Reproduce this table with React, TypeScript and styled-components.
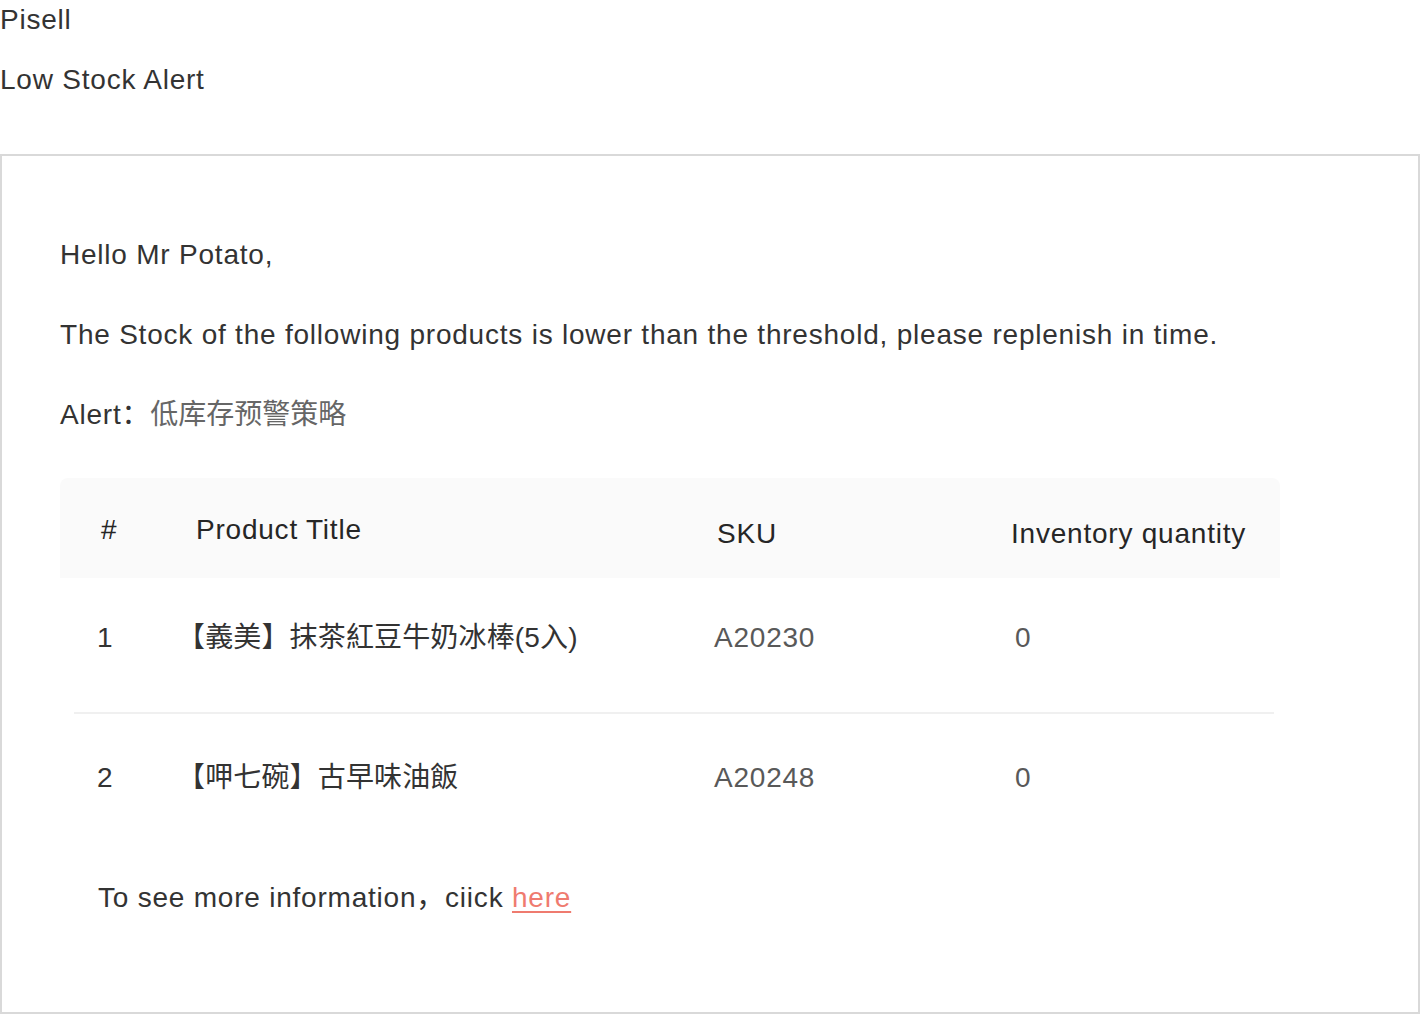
import React from "react";
import styled, { createGlobalStyle } from "styled-components";

const GlobalStyle = createGlobalStyle`
  html, body {
    margin: 0;
    padding: 0;
    background: #ffffff;
  }
  body {
    font-family: "Liberation Sans", "Noto Sans CJK SC", Arial, sans-serif;
    font-size: 28px;
    line-height: 40px;
    letter-spacing: 0.78px;
    color: #333333;
  }
`;

const Page = styled.div`
  width: 1420px;
`;

const Brand = styled.div`
  color: #333333;
`;

const Subject = styled.div`
  margin-top: 20px;
  color: #333333;
`;

const Frame = styled.section`
  box-sizing: border-box;
  margin-top: 54px;
  width: 1420px;
  height: 860px;
  border: 2px solid #d9d9d9;
  padding: 79px 0 0 58px;
`;

const Para = styled.p`
  margin: 0 0 40px;
  color: #333333;
`;

const AlertPara = styled(Para)`
  margin-bottom: 0;
`;

const AlertName = styled.span`
  color: #666666;
  letter-spacing: 0;
`;

const Table = styled.div`
  margin-top: 43px;
  width: 1220px;
`;

const cols = "100px 540px 300px 280px";

const HeaderRow = styled.div`
  display: grid;
  grid-template-columns: ${cols};
  align-items: center;
  height: 100px;
  background: #fafafa;
  border-radius: 8px 8px 0 0;
  color: #262626;
`;

const HeaderCell = styled.div<{ $pl: number; $drop?: number }>`
  padding-left: ${(p) => p.$pl}px;
  padding-top: ${(p) => 4 + (p.$drop ?? 0) * 2}px;
  white-space: nowrap;
`;

const BodyRow = styled.div<{ $pt: number; $pb: number }>`
  display: grid;
  grid-template-columns: ${cols};
  padding-top: ${(p) => p.$pt}px;
  padding-bottom: ${(p) => p.$pb}px;
`;

const BodyCell = styled.div<{ $pl: number; $muted?: boolean; $cjk?: boolean }>`
  padding-left: ${(p) => p.$pl}px;
  color: ${(p) => (p.$muted ? "#595959" : "#333333")};
  letter-spacing: ${(p) => (p.$cjk ? "0.15px" : "0.78px")};
  white-space: nowrap;
`;

const Divider = styled.div`
  height: 2px;
  background: #f0f0f0;
  margin: 0 6px 0 14px;
`;

const Footer = styled.p`
  margin: 80px 0 0;
  padding-left: 38px;
  color: #333333;
`;

const Link = styled.a`
  color: #ef7b6f;
  text-decoration: underline;
  text-underline-offset: 4px;
`;

const rows = [
  { no: "1", title: "【義美】抹茶紅豆牛奶冰棒(5入)", sku: "A20230", qty: "0" },
  { no: "2", title: "【呷七碗】古早味油飯", sku: "A20248", qty: "0" },
];

export default function App() {
  return (
    <Page>
      <GlobalStyle />
      <Brand>Pisell</Brand>
      <Subject>Low Stock Alert</Subject>
      <Frame>
        <Para>Hello Mr Potato,</Para>
        <Para>
          The Stock of the following products is lower than the threshold, please replenish in time.
        </Para>
        <AlertPara>
          Alert：<AlertName>低库存预警策略</AlertName>
        </AlertPara>
        <Table>
          <HeaderRow>
            <HeaderCell $pl={41}>#</HeaderCell>
            <HeaderCell $pl={36}>Product Title</HeaderCell>
            <HeaderCell $pl={17} $drop={4}>SKU</HeaderCell>
            <HeaderCell $pl={11} $drop={4}>Inventory quantity</HeaderCell>
          </HeaderRow>
          {rows.map((r, i) => (
            <React.Fragment key={r.no}>
              {i > 0 && <Divider />}
              <BodyRow $pt={i === 0 ? 40 : 44} $pb={i === 0 ? 54 : 0}>
                <BodyCell $pl={37}>{r.no}</BodyCell>
                <BodyCell $pl={17} $cjk>{r.title}</BodyCell>
                <BodyCell $pl={14} $muted>{r.sku}</BodyCell>
                <BodyCell $pl={15} $muted>{r.qty}</BodyCell>
              </BodyRow>
            </React.Fragment>
          ))}
        </Table>
        <Footer>
          To see more information，ciick <Link href="#">here</Link>
        </Footer>
      </Frame>
    </Page>
  );
}
